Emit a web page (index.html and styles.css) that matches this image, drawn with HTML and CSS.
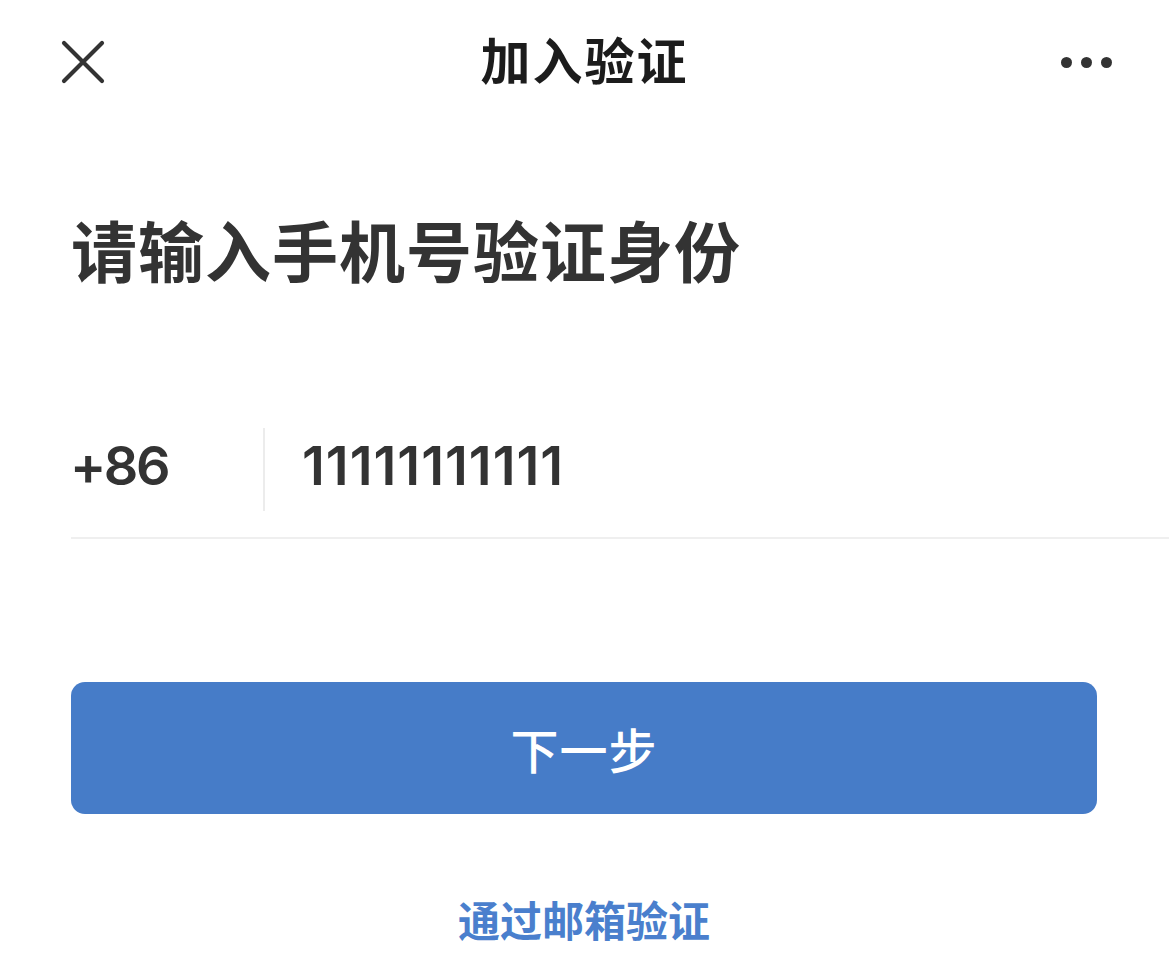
FILE: index.html
```html
<!DOCTYPE html>
<html lang="zh-CN">
<head>
<meta charset="utf-8">
<title>加入验证</title>
<link rel="stylesheet" href="styles.css">
</head>
<body>
<div class="page">
  <header class="nav">
    <button class="nav-btn close" aria-label="关闭">
      <svg width="44" height="44" viewBox="0 0 44 44"><path d="M3 3 L41 41 M41 3 L3 41" stroke="#333" stroke-width="4.2" stroke-linecap="round" fill="none"/></svg>
    </button>
    <h1 class="nav-title">加入验证</h1>
    <button class="nav-btn more" aria-label="更多">
      <span class="dot"></span><span class="dot"></span><span class="dot"></span>
    </button>
  </header>

  <main class="content">
    <h2 class="heading">请输入手机号验证身份</h2>

    <div class="phone-row">
      <div class="prefix">+86</div>
      <div class="divider"></div>
      <div class="number">11111111111</div>
    </div>

    <button class="primary">下一步</button>

    <a class="alt-link" href="#">通过邮箱验证</a>
  </main>
</div>
</body>
</html>
```

FILE: styles.css
```css
* { box-sizing: border-box; }
html, body {
  margin: 0;
  padding: 0;
  background: #fff;
}
body {
  font-family: "Noto Sans CJK SC", "Inter", sans-serif;
  width: 1169px;
  height: 965px;
  overflow: hidden;
}
.page {
  display: flex;
  flex-direction: column;
}
.nav {
  height: 124px;
  display: flex;
  align-items: center;
  justify-content: space-between;
  padding: 0 57px 0 61px;
  position: relative;
}
.nav-btn {
  border: 0;
  background: none;
  padding: 0;
  display: flex;
  align-items: center;
  cursor: pointer;
}
.close { width: 44px; height: 44px; }
.more {
  gap: 9px;
}
.dot {
  width: 11px;
  height: 11px;
  border-radius: 50%;
  background: #333;
}
.nav-title {
  position: absolute;
  left: 0;
  right: 0;
  top: 33px;
  text-align: center;
  margin: 0;
  font-size: 50px;
  font-weight: 700;
  line-height: 50px;
  color: #1c1c1c;
  letter-spacing: 2px;
  pointer-events: none;
}
.content {
  display: flex;
  flex-direction: column;
  padding-left: 71px;
}
.heading {
  margin: 91px 0 0;
  font-size: 66px;
  line-height: 66px;
  font-weight: 700;
  color: #333;
  letter-spacing: 1px;
}
.phone-row {
  margin-top: 121px;
  height: 137px;
  display: flex;
  align-items: center;
  border-bottom: 2px solid #efefef;
  font-family: "Inter", "Noto Sans CJK SC", sans-serif;
  font-size: 54px;
  line-height: 54px;
  font-weight: 600;
  color: #333;
}
.prefix {
  width: 193px;
  margin-left: -1px;
  letter-spacing: -2.5px;
  padding-bottom: 8px;
}
.divider {
  width: 2px;
  height: 83px;
  background: #ececec;
}
.number {
  margin-left: 37px;
  letter-spacing: 1px;
  padding-bottom: 8px;
}
.primary {
  margin: 143px 72px 0 0;
  height: 132px;
  border: 0;
  border-radius: 14px;
  background: #467cc8;
  color: #fff;
  font-family: "Noto Sans CJK SC", sans-serif;
  font-size: 48px;
  font-weight: 500;
  letter-spacing: 1px;
  cursor: pointer;
}
.alt-link {
  margin: 84px 72px 0 0;
  text-align: center;
  font-size: 42px;
  line-height: 42px;
  font-weight: 600;
  color: #4a7fcd;
  text-decoration: none;
}
```
